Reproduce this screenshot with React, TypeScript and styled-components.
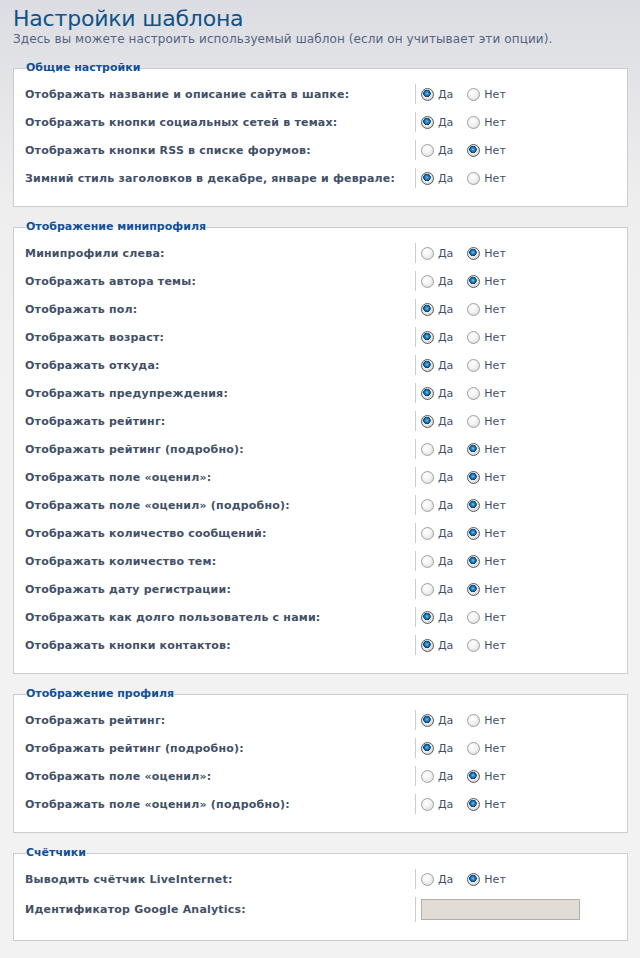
import { createGlobalStyle } from "styled-components";
import styled from "styled-components";

const GlobalStyle = createGlobalStyle`
  html, body {
    margin: 0;
    padding: 0;
  }
  body {
    min-height: 958px;
    background: linear-gradient(180deg, #dcdde2 0px, #eeeeef 200px, #f2f2f2 400px);
    font-family: "DejaVu Sans", Verdana, sans-serif;
  }
`;

type Choice = "yes" | "no";

interface Option {
  label: string;
  value: Choice;
}

const general: Option[] = [
  { label: "Отображать название и описание сайта в шапке:", value: "yes" },
  { label: "Отображать кнопки социальных сетей в темах:", value: "yes" },
  { label: "Отображать кнопки RSS в списке форумов:", value: "no" },
  { label: "Зимний стиль заголовков в декабре, январе и феврале:", value: "yes" },
];

const miniprofile: Option[] = [
  { label: "Минипрофили слева:", value: "no" },
  { label: "Отображать автора темы:", value: "no" },
  { label: "Отображать пол:", value: "yes" },
  { label: "Отображать возраст:", value: "yes" },
  { label: "Отображать откуда:", value: "yes" },
  { label: "Отображать предупреждения:", value: "yes" },
  { label: "Отображать рейтинг:", value: "yes" },
  { label: "Отображать рейтинг (подробно):", value: "no" },
  { label: "Отображать поле «оценил»:", value: "no" },
  { label: "Отображать поле «оценил» (подробно):", value: "no" },
  { label: "Отображать количество сообщений:", value: "no" },
  { label: "Отображать количество тем:", value: "no" },
  { label: "Отображать дату регистрации:", value: "no" },
  { label: "Отображать как долго пользователь с нами:", value: "yes" },
  { label: "Отображать кнопки контактов:", value: "yes" },
];

const profile: Option[] = [
  { label: "Отображать рейтинг:", value: "yes" },
  { label: "Отображать рейтинг (подробно):", value: "yes" },
  { label: "Отображать поле «оценил»:", value: "no" },
  { label: "Отображать поле «оценил» (подробно):", value: "no" },
];

function YesNo({ name, value }: { name: string; value: Choice }) {
  return (
    <Row.Value>
      <Radio.Label>
        <Radio.Input type="radio" name={name} defaultChecked={value === "yes"} />
        Да
      </Radio.Label>
      <Radio.Label>
        <Radio.Input type="radio" name={name} defaultChecked={value === "no"} />
        Нет
      </Radio.Label>
    </Row.Value>
  );
}

function Section({ title, prefix, options }: { title: string; prefix: string; options: Option[] }) {
  return (
    <Fieldset>
      <Legend>{title}</Legend>
      <Rows>
        {options.map((o, i) => (
          <Row.Line key={i}>
            <Row.Term>{o.label}</Row.Term>
            <YesNo name={`${prefix}_${i}`} value={o.value} />
          </Row.Line>
        ))}
      </Rows>
    </Fieldset>
  );
}

export default function App() {
  return (
    <Page>
      <GlobalStyle />
      <Title>Настройки шаблона</Title>
      <Intro>Здесь вы можете настроить используемый шаблон (если он учитывает эти опции).</Intro>
      <Section title="Общие настройки" prefix="general" options={general} />
      <Section title="Отображение минипрофиля" prefix="mini" options={miniprofile} />
      <Section title="Отображение профиля" prefix="profile" options={profile} />
      <Fieldset>
        <Legend>Счётчики</Legend>
        <Rows>
          <Row.Line>
            <Row.Term>Выводить счётчик LiveInternet:</Row.Term>
            <YesNo name="liveinternet" value="no" />
          </Row.Line>
          <Row.Line $tall>
            <Row.Term>Идентификатор Google Analytics:</Row.Term>
            <Row.Value>
              <TextInput type="text" defaultValue="" />
            </Row.Value>
          </Row.Line>
        </Rows>
      </Fieldset>
    </Page>
  );
}

const Page = styled.div`
  padding: 5px 12px 10px 13px;
`;

const Title = styled.h1`
  margin: 0;
  font-family: "DejaVu Sans", "Open Sans", sans-serif;
  font-size: 22px;
  line-height: 27px;
  font-weight: normal;
  color: #105289;
  letter-spacing: -0.2px;
`;

const Intro = styled.p`
  margin: 0;
  font-size: 12px;
  line-height: 15px;
  letter-spacing: 0.1px;
  color: #536482;
`;

const Fieldset = styled.fieldset`
  margin: 14px 0 0;
  padding: 9px 11px 18px;
  border: 1px solid #cccccc;
  background: #ffffff;
  min-inline-size: 0;

  & + & {
    margin-top: 13px;
  }
`;

const Legend = styled.legend`
  padding: 0;
  margin-left: 1px;
  font-size: 11px;
  line-height: 14px;
  font-weight: bold;
  color: #115098;
`;

const Rows = styled.div`
  display: flex;
  flex-direction: column;
  gap: 8px;
`;

const Row = {
  Line: styled.div<{ $tall?: boolean }>`
    display: flex;
    align-items: stretch;
    min-height: ${(p) => (p.$tall ? "25px" : "20px")};
  `,
  Term: styled.div`
    width: 390px;
    flex-shrink: 0;
    display: flex;
    align-items: center;
    font-size: 11px;
    font-weight: bold;
    letter-spacing: 0.2px;
    color: #425067;
  `,
  Value: styled.div`
    display: flex;
    align-items: center;
    gap: 14px;
    padding-left: 5px;
    border-left: 1px solid #cccccc;
  `,
};

const Radio = {
  Label: styled.label`
    display: flex;
    align-items: center;
    gap: 4px;
    font-size: 11px;
    color: #425067;
    cursor: pointer;
  `,
  Input: styled.input`
    appearance: none;
    margin: 0;
    width: 13px;
    height: 13px;
    border-radius: 50%;
    border: 1px solid #a0a0a0;
    background: radial-gradient(circle at 40% 35%, #ffffff 0%, #f2f2f2 45%, #d4d4d4 100%);
    box-sizing: border-box;
    cursor: pointer;

    &:checked {
      border-color: #5a5a5a;
      background:
        radial-gradient(circle at 45% 40%, #6cc2f2 0px, #1b7bc0 2px, #0a3f6e 3.5px, transparent 4px),
        radial-gradient(circle at 40% 35%, #ffffff 0%, #e8e8e8 55%, #bdbdbd 100%);
    }
  `,
};

const TextInput = styled.input`
  width: 159px;
  height: 21px;
  box-sizing: border-box;
  margin: 0;
  border: 1px solid #b4b0a8;
  background: #e1ddd6;
  font-size: 11px;
  padding: 2px 4px;
`;
